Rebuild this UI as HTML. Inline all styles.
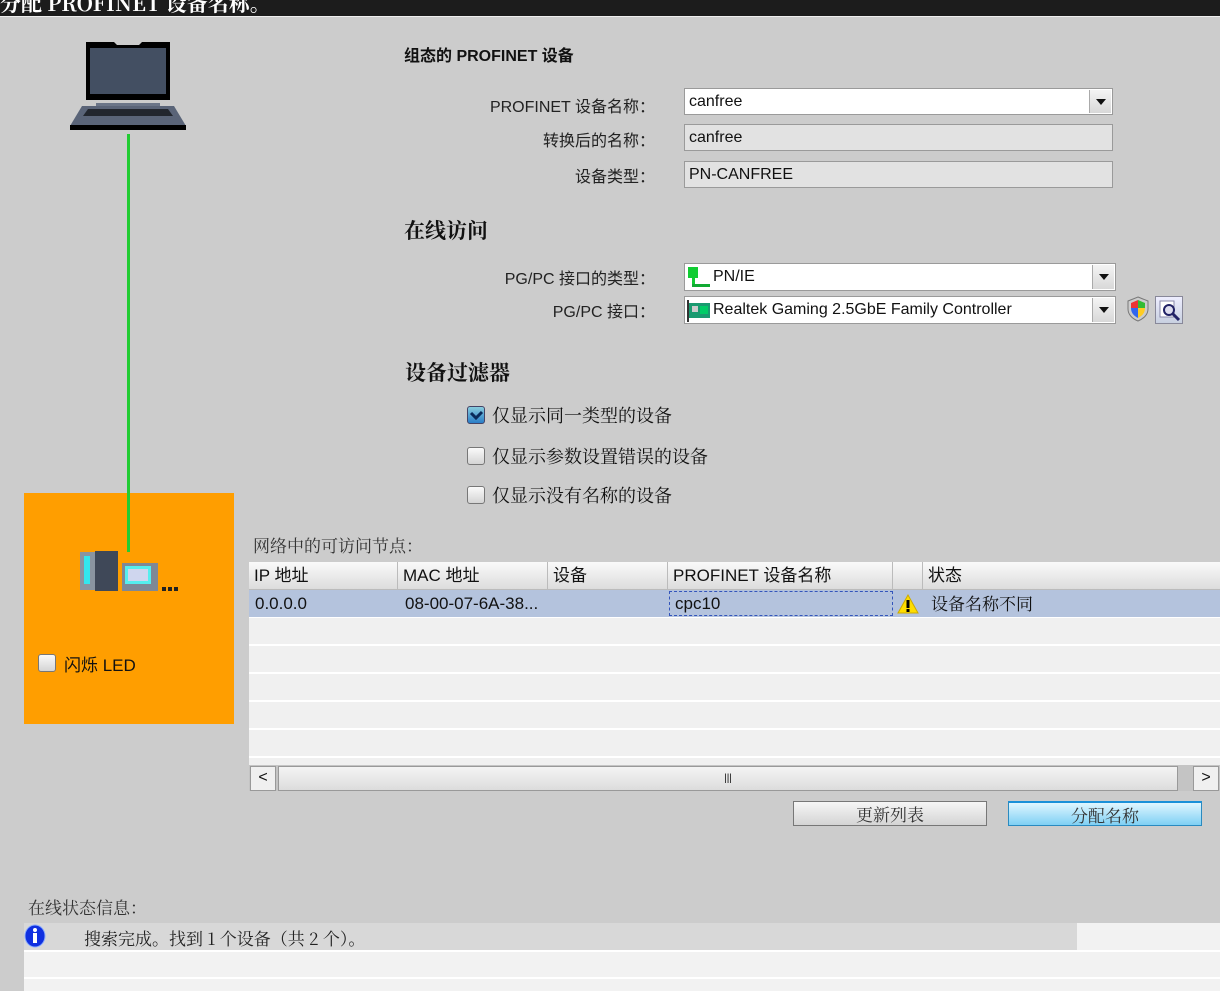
<!DOCTYPE html>
<html><head><meta charset="utf-8"><style>
*{margin:0;padding:0;box-sizing:border-box}
body{width:1220px;height:991px;background:#cccccc;position:relative;overflow:hidden;font-family:"Liberation Sans","Noto Sans CJK SC",sans-serif;font-size:16px;color:#111}
.a{position:absolute;white-space:nowrap}
.lbl{position:absolute;text-align:right;width:310px;left:345px;font-size:16px;color:#222}
.inp{position:absolute;border:1px solid #9a9a9a;background:#e2e2e2;padding-left:4px;padding-top:1px;font-size:16px;line-height:24px}
.dd{position:absolute;right:1px;top:1px;bottom:1px;width:22px;background:linear-gradient(#f4f4f4,#d8d8d8);border-left:1px solid #aaa}
.dd:after{content:"";position:absolute;left:6px;top:9px;border:5px solid transparent;border-top:6px solid #111}
.h2{position:absolute;font-family:"Noto Serif CJK SC","Liberation Serif",serif;font-weight:bold;font-size:21px}
.cb{position:absolute;width:18px;height:18px;border:1px solid #777;border-radius:3px;background:linear-gradient(#fafafa,#d4d4d4)}
.col{position:absolute;top:562px;height:28px;border-right:1px solid #bbb;padding-left:5px;line-height:28px;font-size:17px}
.btn{position:absolute;height:25px;border:1px solid #777;text-align:center;line-height:23px;font-size:17px;font-family:"Noto Serif CJK SC",serif;color:#333}
</style></head><body>
<div class="a" style="left:0;top:0;width:1220px;height:17px;background:#1c1c1c;border-bottom:1px solid #eee"></div>
<div class="a" style="left:0;top:-12px;color:#fff;font-weight:bold;font-size:21px;font-family:'Noto Serif CJK SC','Liberation Sans',serif">分配 PROFINET 设备名称。</div>

<!-- laptop -->
<svg class="a" style="left:68px;top:40px" width="120" height="92" viewBox="0 0 120 92">
<path d="M18 2h28l3 3h22l3-3h28v58H18z" fill="#000"/>
<rect x="22" y="8" width="76" height="46" fill="#434f62"/>
<rect x="28" y="63" width="64" height="3" fill="#6b7588"/>
<path d="M14 66h92l12 20H2z" fill="#5a6478"/>
<path d="M20 69h80l5 7H15z" fill="#22262e"/>
<rect x="2" y="85" width="116" height="5" fill="#000"/>
</svg>
<div class="a" style="left:127px;top:134px;width:3px;height:418px;background:#22cc33"></div>

<!-- orange device -->
<div class="a" style="left:24px;top:493px;width:210px;height:231px;background:#ff9e00"></div>
<div class="a" style="left:127px;top:493px;width:3px;height:59px;background:#22cc33"></div>
<svg class="a" style="left:80px;top:551px" width="100" height="42">
<rect x="0" y="1" width="15" height="38" fill="#8a94a0"/><rect x="4" y="5" width="6" height="28" fill="#33e6ee"/>
<rect x="15" y="0" width="23" height="40" fill="#3f4858"/>
<rect x="42" y="12" width="36" height="28" fill="#7f8896"/><rect x="45" y="15" width="26" height="18" fill="#5ee"/><rect x="48" y="18" width="20" height="12" fill="#cfd6ee"/>
<rect x="82" y="36" width="4" height="4" fill="#222"/><rect x="88" y="36" width="4" height="4" fill="#222"/><rect x="94" y="36" width="4" height="4" fill="#222"/>
</svg>
<div class="cb" style="left:38px;top:654px"></div>
<div class="a" style="left:64px;top:651px;font-size:17px">闪烁 LED</div>

<div class="a" style="left:404px;top:42px;font-size:16px;font-weight:bold">组态的 PROFINET 设备</div>
<div class="lbl" style="top:93px">PROFINET 设备名称：</div>
<div class="inp" style="left:684px;top:88px;width:429px;height:27px;background:#fff">canfree<div class="dd"></div></div>
<div class="lbl" style="top:127px">转换后的名称：</div>
<div class="inp" style="left:684px;top:124px;width:429px;height:27px">canfree</div>
<div class="lbl" style="top:163px">设备类型：</div>
<div class="inp" style="left:684px;top:161px;width:429px;height:27px">PN-CANFREE</div>

<div class="h2" style="left:404px;top:215px">在线访问</div>
<div class="lbl" style="top:265px">PG/PC 接口的类型：</div>
<div class="inp" style="left:684px;top:263px;width:432px;height:28px;background:#fff;padding-left:28px">PN/IE<div class="dd"></div>
<svg class="a" style="left:3px;top:3px" width="24" height="22"><rect x="0" y="0" width="10" height="11" fill="#11cc33"/><rect x="4" y="10" width="3" height="10" fill="#11cc33"/><rect x="4" y="17" width="18" height="3" fill="#11aa33"/></svg></div>
<div class="lbl" style="top:298px">PG/PC 接口：</div>
<div class="inp" style="left:684px;top:296px;width:432px;height:28px;background:#fff;padding-left:28px">Realtek Gaming 2.5GbE Family Controller<div class="dd"></div>
<svg class="a" style="left:2px;top:3px" width="24" height="22"><rect x="1" y="3" width="22" height="15" fill="#1a9a70"/><rect x="5" y="6" width="6" height="6" fill="#ccc"/><rect x="13" y="6" width="8" height="8" fill="#0c6"/><rect x="0" y="0" width="2" height="22" fill="#333"/></svg></div>
<svg class="a" style="left:1126px;top:296px" width="24" height="26"><path d="M12 1l10 4v8c0 6-5 10-10 12C7 23 2 19 2 13V5z" fill="#ccc" stroke="#777"/><path d="M12 4L5 7v5h7z" fill="#e33"/><path d="M12 4l7 3v5h-7z" fill="#3b3"/><path d="M5 12h7v10c-4-2-7-5-7-10z" fill="#36e"/><path d="M12 12h7c0 5-3 8-7 10z" fill="#fc2"/></svg>
<div class="a" style="left:1155px;top:296px;width:28px;height:28px;border:1px solid #889;background:linear-gradient(#eef,#c8d0e0)"><svg width="26" height="26"><rect x="4" y="4" width="14" height="16" fill="#fff" stroke="#88a"/><circle cx="13" cy="13" r="5" fill="#dde" stroke="#226" stroke-width="2"/><path d="M17 17l6 6" stroke="#226" stroke-width="3"/></svg></div>

<div class="h2" style="left:405px;top:357px">设备过滤器</div>
<div class="cb" style="left:467px;top:406px;background:linear-gradient(#8cd,#2a7ec8);border-color:#446"><svg width="16" height="16"><path d="M3 6l5 5 6-6" stroke="#0a2a5a" stroke-width="3" fill="none"/></svg></div>
<div class="a" style="left:492px;top:402px;font-size:18px;font-family:'Noto Serif CJK SC',serif">仅显示同一类型的设备</div>
<div class="cb" style="left:467px;top:447px"></div>
<div class="a" style="left:492px;top:443px;font-size:18px;font-family:'Noto Serif CJK SC',serif">仅显示参数设置错误的设备</div>
<div class="cb" style="left:467px;top:486px"></div>
<div class="a" style="left:492px;top:482px;font-size:18px;font-family:'Noto Serif CJK SC',serif">仅显示没有名称的设备</div>

<div class="a" style="left:253px;top:532px;font-size:17px;font-family:'Noto Serif CJK SC',serif;color:#333">网络中的可访问节点：</div>
<div class="a" style="left:249px;top:562px;width:971px;height:203px;background:#f0f0f0;background-image:repeating-linear-gradient(#f0f0f0 0,#f0f0f0 26px,#fff 26px,#fff 28px)"></div>
<div class="a" style="left:249px;top:562px;width:971px;height:28px;background:linear-gradient(#fafafa,#dcdcdc);border-bottom:1px solid #bbb"></div>
<div class="col" style="left:249px;width:149px">IP 地址</div>
<div class="col" style="left:398px;width:150px">MAC 地址</div>
<div class="col" style="left:548px;width:120px">设备</div>
<div class="col" style="left:668px;width:225px">PROFINET 设备名称</div>
<div class="col" style="left:893px;width:30px"></div>
<div class="col" style="left:923px;width:297px;border:none">状态</div>
<div class="a" style="left:249px;top:590px;width:971px;height:27px;background:#b4c3dd"></div>
<div class="a" style="left:255px;top:594px;font-size:17px">0.0.0.0</div>
<div class="a" style="left:405px;top:594px;font-size:17px">08-00-07-6A-38...</div>
<div class="a" style="left:669px;top:591px;width:224px;height:25px;border:1px dashed #3355bb"></div>
<div class="a" style="left:675px;top:594px;font-size:17px">cpc10</div>
<svg class="a" style="left:897px;top:594px" width="22" height="20"><path d="M11 1L21 19H1z" fill="#fd0" stroke="#ca0"/><rect x="9.5" y="6" width="3" height="8" fill="#000"/><rect x="9.5" y="15" width="3" height="3" fill="#000"/></svg>
<div class="a" style="left:931px;top:590px;font-size:17px;font-family:'Noto Serif CJK SC',serif">设备名称不同</div>

<div class="a" style="left:249px;top:765px;width:971px;height:26px;background:#c4c4c4"></div>
<div class="a" style="left:250px;top:766px;width:26px;height:25px;background:#f0f0f0;border:1px solid #999;text-align:center;line-height:22px;font-size:16px">&lt;</div>
<div class="a" style="left:278px;top:766px;width:900px;height:25px;background:linear-gradient(#f4f4f4,#dcdcdc);border:1px solid #999;text-align:center;font-size:10px;line-height:23px">|||</div>
<div class="a" style="left:1193px;top:766px;width:26px;height:25px;background:#f0f0f0;border:1px solid #999;text-align:center;line-height:22px;font-size:16px">&gt;</div>

<div class="btn" style="left:793px;top:801px;width:194px;background:linear-gradient(#f6f6f6,#d4d4d4)">更新列表</div>
<div class="btn" style="left:1008px;top:801px;width:194px;background:linear-gradient(#e0f6ff,#7fd0f4);border-color:#2a8ac0;border-top:2px solid #1a90d8">分配名称</div>

<div class="a" style="left:28px;top:894px;font-size:17px;font-family:'Noto Serif CJK SC',serif;color:#333">在线状态信息：</div>
<div class="a" style="left:24px;top:923px;width:1196px;height:68px;background:#f2f2f2"></div>
<div class="a" style="left:24px;top:923px;width:1053px;height:27px;background:#d8d8d8"></div>
<div class="a" style="left:24px;top:950px;width:1196px;height:2px;background:#fff"></div>
<div class="a" style="left:24px;top:977px;width:1196px;height:2px;background:#fff"></div>
<svg class="a" style="left:24px;top:924px" width="24" height="24"><ellipse cx="11" cy="12" rx="10" ry="11" fill="#1030e0" stroke="#8af"/><rect x="9" y="9" width="4" height="10" fill="#fff"/><circle cx="11" cy="6" r="2" fill="#fff"/></svg>
<div class="a" style="left:84px;top:925px;font-size:17px;font-family:'Noto Serif CJK SC',serif;color:#222">搜索完成。找到 1 个设备（共 2 个）。</div>
</body></html>
